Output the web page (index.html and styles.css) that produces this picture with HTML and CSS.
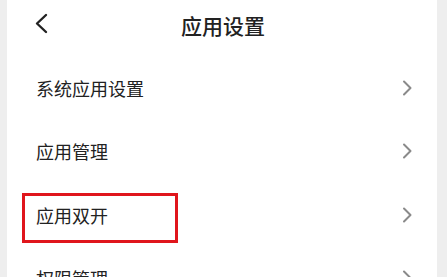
FILE: index.html
```html
<!DOCTYPE html>
<html lang="zh-CN">
<head>
<meta charset="utf-8">
<link rel="stylesheet" href="styles.css">
</head>
<body>
<div class="screen">
  <div class="header">
    <svg class="back" width="16" height="22" viewBox="0 0 16 22"><path d="M11 2 L2 10.5 L11 19" fill="none" stroke="#222" stroke-width="2.4" stroke-linecap="round" stroke-linejoin="round"/></svg>
    <div class="title">应用设置</div>
  </div>
  <div class="list">
    <div class="row"><span class="label">系统应用设置</span><svg class="chev" width="10" height="16" viewBox="0 0 10 16"><path d="M2 1.5 L8.5 8 L2 14.5" fill="none" stroke="#8a8a8a" stroke-width="2" stroke-linecap="round" stroke-linejoin="round"/></svg></div>
    <div class="row"><span class="label">应用管理</span><svg class="chev" width="10" height="16" viewBox="0 0 10 16"><path d="M2 1.5 L8.5 8 L2 14.5" fill="none" stroke="#8a8a8a" stroke-width="2" stroke-linecap="round" stroke-linejoin="round"/></svg></div>
    <div class="row"><span class="label">应用双开</span><svg class="chev" width="10" height="16" viewBox="0 0 10 16"><path d="M2 1.5 L8.5 8 L2 14.5" fill="none" stroke="#8a8a8a" stroke-width="2" stroke-linecap="round" stroke-linejoin="round"/></svg></div>
    <div class="row"><span class="label">权限管理</span><svg class="chev" width="10" height="16" viewBox="0 0 10 16"><path d="M2 1.5 L8.5 8 L2 14.5" fill="none" stroke="#8a8a8a" stroke-width="2" stroke-linecap="round" stroke-linejoin="round"/></svg></div>
  </div>
  <div class="highlight"></div>
</div>
</body>
</html>
```
FILE: styles.css
```css
html, body {
  margin: 0;
  padding: 0;
  height: 100%;
  overflow: hidden;
  background: #eeeeee;
}
body {
  font-family: "Noto Sans CJK SC", "Noto Sans", sans-serif;
  color: #222222;
}
.screen {
  position: relative;
  margin-left: 7px;
  width: 430px;
  height: 277px;
  background: #ffffff;
  overflow: hidden;
}
.header {
  position: relative;
  height: 50px;
  display: flex;
  align-items: center;
  justify-content: center;
}
.back {
  position: absolute;
  left: 28px;
  top: 13px;
}
.title {
  font-size: 21px;
  font-weight: 500;
  line-height: 50px;
  margin-left: 2px;
}
.list {
  padding-top: 6px;
}
.row {
  height: 63.5px;
  display: flex;
  align-items: center;
  justify-content: space-between;
  padding: 0 25px 0 29px;
}
.label {
  font-size: 18px;
  line-height: 24px;
}
.chev {
  display: block;
}
.highlight {
  position: absolute;
  left: 15px;
  top: 193px;
  width: 150px;
  height: 44px;
  border: 3px solid #e0161c;
}
```
